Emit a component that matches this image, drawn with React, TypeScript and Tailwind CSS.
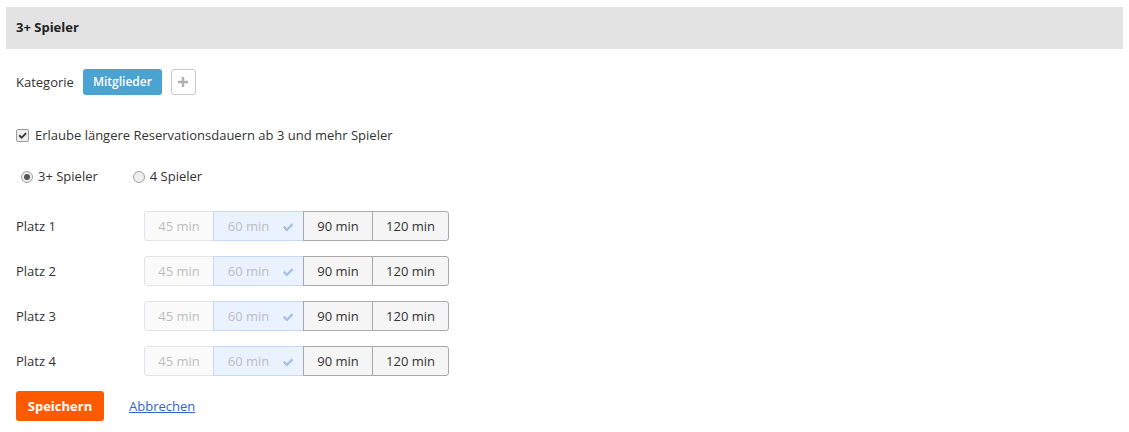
import React from "react";

const rows = ["Platz 1", "Platz 2", "Platz 3", "Platz 4"];

function CheckMark({ className }: { className?: string }) {
  return (
    <svg viewBox="0 0 16 16" className={className} fill="currentColor">
      <path d="M2.2 8.6l1.9-1.9 2.6 2.6 5.6-5.6 1.9 1.9-7.5 7.5z" />
    </svg>
  );
}

function DurationGroup() {
  return (
    <div className="flex h-[30px]">
      <div className="flex w-[70px] items-center justify-center rounded-l-[3px] border border-[#e4e4e4] bg-[#fafafa] pt-px text-[#bdbdbd]">
        45 min
      </div>
      <div className="-ml-px flex w-[91px] items-center justify-center gap-[12px] border border-[#c6d9f6] bg-[#eaf2ff] pl-[6px] pt-px text-[#bdbdbd]">
        <span>60 min</span>
        <CheckMark className="h-[14px] w-[14px] text-[#a7c0e6]" />
      </div>
      <div className="-ml-px flex w-[70px] items-center justify-center border border-[#a9a9a9] bg-[#f5f5f5] pt-px text-[#333]">
        90 min
      </div>
      <div className="-ml-px flex w-[77px] items-center justify-center rounded-r-[3px] border border-[#a9a9a9] bg-[#f5f5f5] pt-px text-[#333]">
        120 min
      </div>
    </div>
  );
}

export default function App() {
  return (
    <div
      className="min-h-[432px] bg-white px-[6px] pt-[7px] text-[13px] text-[#333]"
      style={{ fontFamily: '"Open Sans", "Liberation Sans", sans-serif' }}
    >
      <div className="flex h-[42px] items-center bg-[#e3e3e3] pl-[10px] font-bold text-[#222]">
        3+ Spieler
      </div>

      <div className="px-[10px]">
        <div className="mt-[20px] flex h-[26px] items-center">
          <span className="pt-px">Kategorie</span>
          <button className="ml-[9px] h-[26px] w-[79px] rounded-[3px] bg-[#4ba3d1] text-[12px] font-semibold text-white">
            Mitglieder
          </button>
          <button className="ml-[9px] flex h-[26px] w-[25px] items-center justify-center rounded-[3px] border border-[#c8c8c8] bg-white">
            <svg viewBox="0 0 10 10" className="h-[10px] w-[10px]">
              <path d="M5 0v10M0 5h10" stroke="#b0b0b0" strokeWidth="2.4" />
            </svg>
          </button>
        </div>

        <label className="mt-[30px] flex h-[20px] items-center pt-px">
          <span className="flex h-[13px] w-[13px] items-center justify-center rounded-[2px] border border-[#9a9a9a] bg-[#eee]">
            <CheckMark className="h-[11px] w-[11px] text-[#333]" />
          </span>
          <span className="ml-[6px]">
            Erlaube längere Reservationsdauern ab 3 und mehr Spieler
          </span>
        </label>

        <div className="mt-[21px] flex h-[20px] items-center pl-[5px] pt-px">
          <label className="flex items-center">
            <span className="flex h-[12px] w-[12px] items-center justify-center rounded-full border border-[#a0a0a0] bg-[#eee]">
              <span className="h-[6px] w-[6px] rounded-full bg-[#555]" />
            </span>
            <span className="ml-[5px]">3+ Spieler</span>
          </label>
          <label className="ml-[35px] flex items-center">
            <span className="h-[12px] w-[12px] rounded-full border border-[#a0a0a0] bg-[#eee]" />
            <span className="ml-[5px]">4 Spieler</span>
          </label>
        </div>

        <div className="mt-[25px] flex flex-col gap-[15px]">
          {rows.map((r) => (
            <div key={r} className="flex h-[30px] items-center">
              <span className="w-[128px] pt-px">{r}</span>
              <DurationGroup />
            </div>
          ))}
        </div>

        <div className="mt-[15px] flex items-center">
          <button className="h-[30px] w-[88px] rounded-[3px] bg-[#ff5a00] pt-px font-bold text-white">
            Speichern
          </button>
          <a href="#" className="ml-[25px] pt-px text-[#3366cc] underline">
            Abbrechen
          </a>
        </div>
      </div>
    </div>
  );
}
